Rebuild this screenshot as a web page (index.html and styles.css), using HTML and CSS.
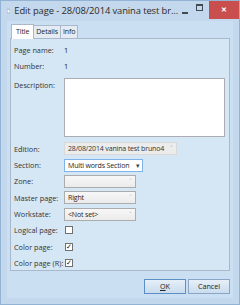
FILE: index.html
```html
<!DOCTYPE html>
<html>
<head>
<meta charset="utf-8">
<link rel="stylesheet" href="styles.css">
</head>
<body>
<div class="window">
  <div class="titlebar">
    <svg class="app-icon" width="8" height="10" viewBox="0 0 8 10">
      <path d="M0.5 0.5 H5 L7.5 3 V9.5 H0.5 Z" fill="#fff" stroke="#7d8a99"/>
      <path d="M5 0.5 V3 H7.5" fill="none" stroke="#7d8a99"/>
    </svg>
    <span class="title">Edit page - 28/08/2014 vanina test br...</span>
    <div class="controls">
      <span class="ctl ctl-min"><span class="dash"></span></span>
      <span class="ctl ctl-max"><span class="box"></span></span>
      <span class="ctl ctl-close">&#x2715;</span>
    </div>
  </div>
  <div class="client">
    <div class="tabs">
      <span class="tab active">Title</span>
      <span class="tab">Details</span>
      <span class="tab">Info</span>
    </div>
    <div class="panel">
      <div class="form">
        <span class="lbl">Page name:</span><span class="val">1</span>
        <span class="lbl">Number:</span><span class="val">1</span>
        <span class="lbl lbl-top">Description:</span><div class="textarea"></div>
        <span class="lbl">Edition:</span>
        <div><span class="combo disabled w113"><span class="ctext">28/08/2014 vanina test bruno4</span><span class="arrow">&#x02C5;</span></span></div>
        <span class="lbl">Section:</span>
        <div><span class="combo focused w79"><span class="ctext">Multi words Section</span><span class="arrow dark">&#x25BE;</span></span></div>
        <span class="lbl">Zone:</span>
        <div><span class="combo w72"><span class="ctext"></span><span class="arrow">&#x02C5;</span></span></div>
        <span class="lbl">Master page:</span>
        <div><span class="combo w72"><span class="ctext">Right</span><span class="arrow">&#x02C5;</span></span></div>
        <span class="lbl">Workstate:</span>
        <div><span class="combo w72"><span class="ctext">&lt;Not set&gt;</span><span class="arrow">&#x02C5;</span></span></div>
        <span class="lbl">Logical page:</span>
        <div class="cbwrap"><span class="cb"></span></div>
        <span class="lbl">Color page:</span>
        <div class="cbwrap"><span class="cb checked">&#x2713;</span></div>
        <span class="lbl">Color page (R):</span>
        <div class="cbwrap"><span class="cb checked">&#x2713;</span></div>
      </div>
    </div>
    <div class="footer">
      <span class="btn default"><u>O</u>K</span>
      <span class="btn">Cancel</span>
    </div>
  </div>
</div>
</body>
</html>
```
FILE: styles.css
```css
html, body {
  margin: 0;
  padding: 0;
}
body {
  width: 240px;
  height: 305px;
  overflow: hidden;
  background: #bcd3ea;
  font-family: "Open Sans", "Noto Sans", sans-serif;
  color: #1e1e1e;
}
.window {
  width: 240px;
  height: 305px;
  box-sizing: border-box;
  border: 1px solid #93b3d4;
  background: #c3d8ed;
  display: flex;
  flex-direction: column;
}
.titlebar {
  height: 20px;
  display: flex;
  align-items: flex-start;
  flex-shrink: 0;
}
.app-icon {
  margin: 5px 0 0 6px;
}
.title {
  margin-left: 4px;
  font-size: 9.4px;
  line-height: 20px;
  color: #2b2b2b;
  white-space: nowrap;
  letter-spacing: -0.1px;
}
.controls {
  margin-left: auto;
  display: flex;
  align-items: flex-start;
}
.ctl {
  display: flex;
  justify-content: center;
  height: 18px;
}
.ctl-min {
  width: 14px;
}
.dash {
  width: 6px;
  height: 2px;
  background: #404a55;
  margin-top: 11px;
}
.ctl-max {
  width: 14px;
  margin-right: 3px;
}
.box {
  width: 5px;
  height: 4px;
  border: 1px solid #404a55;
  border-top-width: 2px;
  margin-top: 3px;
}
.ctl-close {
  width: 30px;
  background: #c94f4f;
  color: #fff;
  font-size: 7px;
  line-height: 17px;
  font-weight: bold;
}
.client {
  flex: 1;
  display: flex;
  flex-direction: column;
  padding: 2px 3px 0 3px;
  background: #cadff1;
  margin: 0 6px 6px 6px;
}
.tabs {
  display: flex;
  height: 15px;
  align-items: flex-end;
  position: relative;
  z-index: 1;
  margin-left: 1px;
}
.tab {
  font-size: 7px;
  line-height: 12px;
  height: 12px;
  padding: 0 2px;
  border: 1px solid #a9b9cb;
  border-bottom: none;
  background: #e4ebf2;
  color: #222;
  margin-right: -1px;
  letter-spacing: -0.1px;
}
.tab.active {
  height: 14px;
  line-height: 14px;
  background: #ffffff;
  padding: 0 4px;
  margin-bottom: -1px;
}
.panel {
  height: 233px;
  box-sizing: border-box;
  border: 1px solid #a9b9cb;
  background: #d5e6f5;
  padding: 4.5px 4px 0 3px;
}
.form {
  display: grid;
  grid-template-columns: 50px 161px;
  grid-template-rows: 13px 13px 63px;
  grid-auto-rows: 13px;
  row-gap: 3.3px;
  align-items: center;
}
.lbl {
  font-size: 7.3px;
  color: #333;
  white-space: nowrap;
}
.lbl-top {
  align-self: start;
  margin-top: 4px;
}
.val {
  font-size: 7.3px;
  color: #1a1a1a;
}
.textarea {
  height: 59px;
  align-self: start;
  margin-top: 2px;
  background: #fff;
  border: 1px solid #abadb3;
  box-sizing: border-box;
}
.combo {
  display: flex;
  align-items: center;
  height: 13px;
  box-sizing: border-box;
  border: 1px solid #acacac;
  background: linear-gradient(#f7f7f7, #ebebeb);
  font-size: 7px;
}
.combo.disabled {
  border-color: #d9d9d9;
  background: #ececec;
  color: #333;
}
.combo.focused {
  border-color: #7eb4ea;
  background: #ffffff;
}
.ctext {
  flex: 1;
  padding-left: 3px;
  white-space: nowrap;
  overflow: hidden;
  letter-spacing: -0.15px;
}
.arrow {
  width: 9px;
  flex-shrink: 0;
  text-align: center;
  font-size: 7px;
  color: #888;
  line-height: 13px;
}
.arrow.dark {
  color: #444;
}
.w113 { width: 113px; }
.w79 { width: 79px; }
.w72 { width: 72px; }
.cbwrap {
  display: flex;
  align-items: center;
}
.cb {
  width: 8px;
  height: 8px;
  box-sizing: border-box;
  border: 1px solid #707070;
  background: #fff;
  font-size: 7px;
  line-height: 6px;
  text-align: center;
  color: #111;
  font-weight: bold;
  font-family: "DejaVu Sans", sans-serif;
  margin-left: 1px;
}
.footer {
  display: flex;
  justify-content: flex-end;
  gap: 2px;
  margin-top: 8px;
}
.btn {
  width: 42px;
  height: 15px;
  box-sizing: border-box;
  border: 1px solid #8aa6c4;
  background: linear-gradient(#e6eff8, #c9dcee);
  font-size: 7.2px;
  line-height: 13px;
  text-align: center;
  color: #222;
}
.btn.default {
  border-color: #5c8fc6;
}
```
